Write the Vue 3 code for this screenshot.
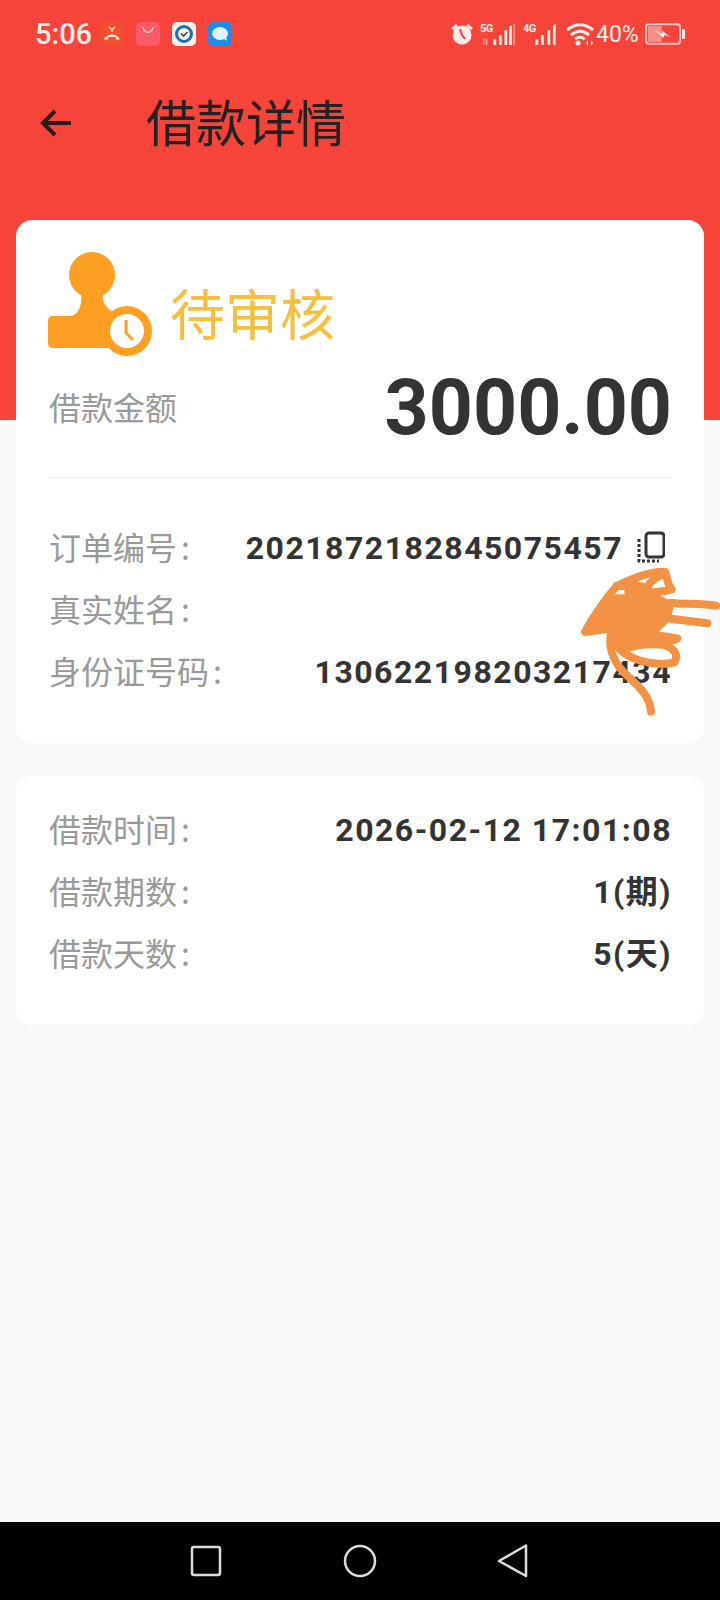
<script setup>
const orderRows = [
  { label: "订单编号", value: "2021872182845075457", copy: true },
  { label: "真实姓名", value: "***" },
  { label: "身份证号码", value: "130622198203217434" },
];
const loanRows = [
  { label: "借款时间", value: "2026-02-12 17:01:08" },
  { label: "借款期数", value: "1(期)" },
  { label: "借款天数", value: "5(天)" },
];
</script>

<template>
  <div class="page">
    <div class="status-bar">
      <div class="status-left">
        <span class="time">5:06</span>
        <svg class="app-icon" viewBox="0 0 24 24">
          <rect width="24" height="24" rx="5" fill="#f0502f" />
          <path d="M4 17c4-6 12-6 16 0l-3 1-2-3h-6l-2 3z" fill="#ffe9dc" />
          <path d="M9 5l3 3 3-3M12 8v2" stroke="#ffe9dc" stroke-width="1.300" fill="none" />
        </svg>
        <svg class="app-icon" viewBox="0 0 24 24">
          <rect width="24" height="24" rx="5" fill="#fb5a68" />
          <path d="M7 5c1 7 9 7 10 0" stroke="#ffe3e3" stroke-width="1.300" fill="none" />
        </svg>
        <svg class="app-icon" viewBox="0 0 24 24">
          <rect width="24" height="24" rx="5" fill="#f4f2ee" />
          <circle cx="12" cy="12" r="7.500" fill="none" stroke="#1f6fa8" stroke-width="3" />
          <path d="M9 11.500l2.500 2.500L15.500 10" stroke="#333" stroke-width="1.300" fill="none" />
        </svg>
        <svg class="app-icon" viewBox="0 0 24 24">
          <rect width="24" height="24" rx="5" fill="#1a8cf0" />
          <ellipse cx="12" cy="11.500" rx="8" ry="6.500" fill="#dff3fb" />
          <path d="M15 16l4 3-1-5z" fill="#dff3fb" />
        </svg>
      </div>
      <div class="status-right">
        <svg class="alarm" viewBox="0 0 24 24">
          <circle cx="12" cy="13" r="9.500" fill="#fdeeea" />
          <path d="M1 6l5-4 2 2-5 4zM23 6l-5-4-2 2 5 4z" fill="#fdeeea" />
          <path d="M10 7l2 6 3 4" stroke="#f6443a" stroke-width="2" fill="none" />
        </svg>
        <div class="signal first-signal">
          <span class="net">5G</span>
          <svg class="bars" viewBox="0 0 26 24">
            <path d="M3 18v6M9 13v11M15 8v16M20 3v21" stroke="#fdeeea" stroke-width="3" />
            <path d="M24 1v23" stroke="#fb8f87" stroke-width="2" />
            <path d="M-9 24v-7M-6 17v7" stroke="#fb8f87" stroke-width="2" />
          </svg>
        </div>
        <div class="signal">
          <span class="net">4G</span>
          <svg class="bars" viewBox="0 0 26 24">
            <path d="M3 18v6M9 13v11M16 8v16M22 2v22" stroke="#fdeeea" stroke-width="3" />
          </svg>
        </div>
        <svg class="wifi" viewBox="0 0 28 24">
          <path d="M1 8c8-7 18-7 26 0M5 13c6-5 12-5 18 0M9 17c3-2 7-2 10 0" stroke="#fdeeea" stroke-width="3" fill="none" />
          <circle cx="12" cy="21" r="2.500" fill="#fdeeea" />
          <path d="M20 21l2-3v6zM27 21l-2-3v6z" fill="#fdeeea" />
        </svg>
        <span class="percent">40%</span>
        <svg class="battery" viewBox="0 0 42 22">
          <rect x="1" y="1" width="35" height="20" rx="3" fill="none" stroke="#fbc9c4" stroke-width="2" />
          <rect x="3" y="3" width="14" height="16" fill="#fb8f87" />
          <path d="M10 7l7 4 1-3 8 6-6-2-1 3z" fill="#fdeeea" />
          <rect x="38" y="6" width="3" height="10" rx="1" fill="#fdeeea" />
        </svg>
      </div>
    </div>

    <header class="top-bar">
      <svg class="back" viewBox="0 0 32 28">
        <path d="M31 14H3M15 2L3 14l12 12" stroke="#2a1a1a" stroke-width="4" fill="none" />
      </svg>
      <h1 class="title">借款详情</h1>
    </header>

    <section class="card first-card">
      <div class="status-row">
        <svg class="stamp" viewBox="0 0 104 106">
          <circle cx="44" cy="25" r="23" fill="#fd9f22" />
          <path d="M33 42C35 55 30 66 22 66H5Q0 66 0 71V93Q0 98 5 98H70V66L62 60C56 55 54 50 55 42Z" fill="#fd9f22" />
          <circle cx="79" cy="81" r="25" fill="#fd9f22" />
          <circle cx="79" cy="81" r="17" fill="#fff" />
          <path d="M78 70V83L85 90" stroke="#fd9f22" stroke-width="3" fill="none" />
        </svg>
        <span class="status-text">待审核</span>
      </div>
      <div class="amount-row">
        <span class="amount-label">借款金额</span>
        <span class="amount">3000.00</span>
      </div>
      <div class="divider"></div>
      <div class="row" v-for="row in orderRows" :key="row.label">
        <span class="label">{{ row.label }}<span class="colon">:</span></span>
        <span class="value">
          {{ row.value }}
          <svg v-if="row.copy" class="copy" viewBox="0 0 28 34">
            <rect x="9" y="2" width="18" height="24" rx="3" fill="none" stroke="#333" stroke-width="3" />
            <path d="M2 8v22h20" stroke="#333" stroke-width="3" stroke-dasharray="3 2" fill="none" />
          </svg>
        </span>
      </div>
    </section>

    <section class="card second-card">
      <div class="row" v-for="row in loanRows" :key="row.label">
        <span class="label">{{ row.label }}<span class="colon">:</span></span>
        <span class="value">{{ row.value }}</span>
      </div>
    </section>

    <nav class="nav-bar">
      <svg class="nav-icon" viewBox="0 0 34 34">
        <rect x="3" y="3" width="28" height="28" rx="2" fill="none" stroke="#ddd" stroke-width="2.500" />
      </svg>
      <svg class="nav-icon" viewBox="0 0 34 34">
        <circle cx="17" cy="17" r="15" fill="none" stroke="#ddd" stroke-width="2.500" />
      </svg>
      <svg class="nav-icon" viewBox="0 0 34 34">
        <path d="M2 17L29 1.500V32Z" fill="none" stroke="#ddd" stroke-width="2.500" stroke-linejoin="round" />
      </svg>
    </nav>

    <!-- the marker scribble drawn over the name, coords are the 3x crop of that spot -->
    <svg class="scribble" viewBox="0 0 450 480">
      <path d="M50 215L100 140L140 115L260 115L300 135L290 175L255 210L240 240L135 232L130 205Z" class="blob" />
      <path d="M45 215C70 170 95 130 140 78C180 60 230 35 285 35C292 50 290 70 305 88C260 100 220 100 175 95" />
      <path d="M140 78C170 80 205 70 232 85C240 60 270 45 285 40" />
      <path d="M300 128C340 133 390 130 438 137" />
      <path d="M290 175C330 180 370 185 412 190" />
      <path d="M130 240C190 225 260 222 322 235C300 250 200 255 135 245" />
      <path d="M135 250C165 300 250 320 312 308C325 290 320 270 285 255C240 250 195 255 160 268" />
      <path d="M122 225C115 270 135 315 175 350C215 385 240 415 243 455" />
    </svg>
  </div>
</template>

<style scoped>
.page {
  position: relative;
  width: 720px;
  height: 1600px;
  display: flex;
  flex-direction: column;
  overflow: hidden;
  background: linear-gradient(#f6443a 420px, #f9f9f9 420px);
  font-family: "Noto Sans CJK SC", sans-serif;
}

.status-bar {
  height: 68px;
  display: flex;
  justify-content: space-between;
  align-items: center;
  padding: 0 34px 0 35px;
  color: #fdeeea;
}

.status-left,
.status-right {
  display: flex;
  align-items: center;
}

.time {
  width: 65px;
  font-family: Roboto, sans-serif;
  font-size: 29px;
  font-weight: 500;
}

.app-icon {
  width: 24px;
  height: 24px;
  margin-right: 12px;
}

.alarm {
  width: 24px;
  height: 24px;
  margin-right: 6px;
}

.signal {
  position: relative;
  width: 36px;
  height: 26px;
  margin-right: 7px;
}

.first-signal {
  width: 37px;
  margin-right: 6px;
}

.net {
  position: absolute;
  left: 0;
  top: 2px;
  font-family: Roboto, sans-serif;
  font-size: 11px;
  line-height: 11px;
  letter-spacing: -0.500px;
  font-weight: 700;
}

.bars {
  position: absolute;
  right: 0;
  bottom: 2px;
  width: 26px;
  height: 22px;
  overflow: visible;
}

.wifi {
  width: 28px;
  height: 24px;
}

.percent {
  margin-left: 2px;
  width: 49px;
  font-family: Roboto, sans-serif;
  font-size: 23px;
}

.battery {
  width: 41px;
  height: 22px;
}

.top-bar {
  height: 110px;
  display: flex;
  align-items: center;
}

.back {
  width: 32px;
  height: 28px;
  margin-left: 40px;
}

.title {
  margin: 0 0 6px 74px;
  font-size: 50px;
  font-weight: 400;
  color: #222;
}

.card {
  margin: 0 16px;
  background: #fff;
  border-radius: 16px;
  padding: 0 32px;
}

.first-card {
  margin-top: 42px;
  padding-top: 30px;
  padding-bottom: 40px;
}

.second-card {
  margin-top: 33px;
  padding-top: 23px;
  padding-bottom: 40px;
}

.status-row {
  display: flex;
  align-items: center;
  height: 106px;
}

.stamp {
  width: 104px;
  height: 106px;
}

.status-text {
  margin: 16px 0 0 18px;
  font-size: 55px;
  color: #f4bf3c;
}

.amount-row {
  height: 84px;
  margin-top: 10px;
  display: flex;
  justify-content: space-between;
  align-items: center;
}

.amount-label {
  margin: 0 0 4px 1px;
  font-size: 32px;
  color: #999;
}

.amount {
  font-family: Roboto, sans-serif;
  font-size: 77px;
  font-weight: 700;
  color: #333;
}

.divider {
  height: 1px;
  margin: 27px 0 39px;
  background: #eee;
}

.row {
  height: 62px;
  display: flex;
  justify-content: space-between;
  align-items: center;
}

.label {
  margin: 0 0 4px 1px;
  font-size: 32px;
  color: #999;
}

.colon {
  margin-left: 4px;
}

.value {
  display: flex;
  align-items: center;
  font-family: Roboto, "Noto Sans CJK SC", sans-serif;
  font-size: 32px;
  line-height: 38px;
  font-weight: 700;
  letter-spacing: 1.500px;
  color: #333;
}

.copy {
  width: 28px;
  height: 34px;
  margin: 0 7px 0 14px;
}

.nav-bar {
  margin-top: auto;
  height: 78px;
  background: #000;
  display: flex;
  justify-content: center;
  align-items: center;
  gap: 120px;
}

.nav-icon {
  width: 34px;
  height: 34px;
}

.scribble {
  position: absolute;
  left: 570px;
  top: 560px;
  width: 150px;
  height: 160px;
  fill: none;
  stroke: #f39245;
  stroke-width: 24px;
  stroke-linecap: round;
  stroke-linejoin: round;
}

.blob {
  fill: #f39245;
}
</style>
